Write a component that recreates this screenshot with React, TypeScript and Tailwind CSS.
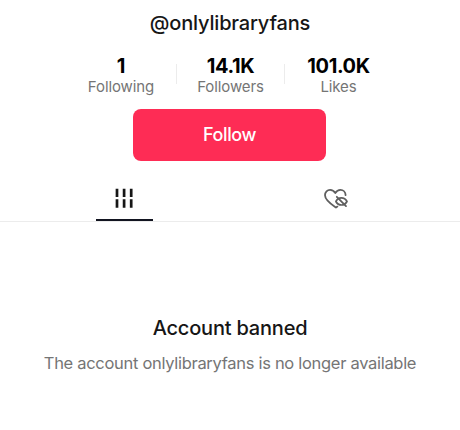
import { ReactNode } from "react";

const STATS = [
  { value: "1", label: "Following", box: "w-[110px]", num: "tracking-normal" },
  { value: "14.1K", label: "Followers", box: "w-[107px]", num: "tracking-[-0.4px]" },
  { value: "101.0K", label: "Likes", box: "w-[107px]", num: "tracking-[-0.4px]" },
];

function Stat({ value, label, box, num }: (typeof STATS)[number]) {
  return (
    <div className={`flex flex-col items-center whitespace-nowrap ${box}`}>
      <span className={`text-[20px] leading-5 font-bold text-black ${num}`}>{value}</span>
      <span className="text-[15px] leading-[21px] tracking-[-0.1px] text-[#757575]">{label}</span>
    </div>
  );
}

function GridIcon() {
  return (
    <svg width="18" height="20" viewBox="0 0 18 20" fill="none" stroke="#161616" strokeWidth="2.7">
      <path d="M2 .8v8.2M9.1 .8v8.2M16.2 .8v8.2M2 11.3v8.4M9.1 11.3v8.4M16.2 11.3v8.4" />
    </svg>
  );
}

/** Heart with a crossed-out eye over its lower right side. */
function HiddenLikesIcon() {
  return (
    <svg width="26" height="22" viewBox="0 0 26 22" fill="none" stroke="#5f5f5f" strokeWidth="1.8" strokeLinecap="round" strokeLinejoin="round">
      <path d="M14.4 18.6 13 19.5C10 17.4 2 12.4 2 7.2 2 4 4.3 1.8 7.1 1.8c2.4 0 4 1.2 5.2 3.2 1.2-2 2.8-3.2 5.1-3.2 2.9 0 5.1 2.2 5.2 5.3" />
      <path d="M12.9 13.5c1.2-2.4 3-3.6 5.5-3.6s4.3 1.2 5.6 3.6c-1.3 2.3-3.2 3.5-5.6 3.5s-4.3-1.2-5.5-3.5Z" strokeWidth="1.7" />
      <path d="m13.8 8.8 9.2 9.3" strokeWidth="1.8" />
    </svg>
  );
}

function Tab({ active, children }: { active?: boolean; children: ReactNode }) {
  return (
    <div className="w-[212px] flex flex-col items-center">
      <div className="h-[33px] flex items-start">{children}</div>
      <div className={`w-[57px] h-[2px] shrink-0 ${active ? "bg-[#121420]" : ""}`} />
    </div>
  );
}

export default function App() {
  return (
    <main className="w-[460px] h-[430px] overflow-hidden bg-white flex flex-col items-center font-['Inter','Liberation_Sans',sans-serif]">
      <h1 className="mt-[11px] text-[20px] leading-6 font-medium tracking-[-0.18px] text-[#161616] whitespace-nowrap">
        @onlylibraryfans
      </h1>

      <div className="mt-[21px] mr-[2px] flex items-start">
        <Stat {...STATS[0]} />
        <div className="mt-2 w-px h-5 bg-[#ececec]" />
        <Stat {...STATS[1]} />
        <div className="mt-2 w-px h-5 bg-[#ececec]" />
        <Stat {...STATS[2]} />
      </div>

      <button className="mt-3 mr-px w-[193px] h-[51.5px] shrink-0 rounded-lg bg-[#fe2c55] text-white text-[18px] font-medium tracking-[-0.4px]">
        Follow
      </button>

      <div className="mt-[27.5px] w-full h-[34px] shrink-0 flex justify-center border-b border-[#ececec]">
        <Tab active>
          <GridIcon />
        </Tab>
        <Tab>
          <HiddenLikesIcon />
        </Tab>
      </div>

      <h2 className="mt-[94px] text-[20px] leading-6 font-medium tracking-[-0.2px] text-[#161616] whitespace-nowrap">
        Account banned
      </h2>
      <p className="mt-[11px] text-[16.5px] leading-6 tracking-[-0.3px] text-[#757575] whitespace-nowrap">
        The account onlylibraryfans is no longer available
      </p>
    </main>
  );
}
